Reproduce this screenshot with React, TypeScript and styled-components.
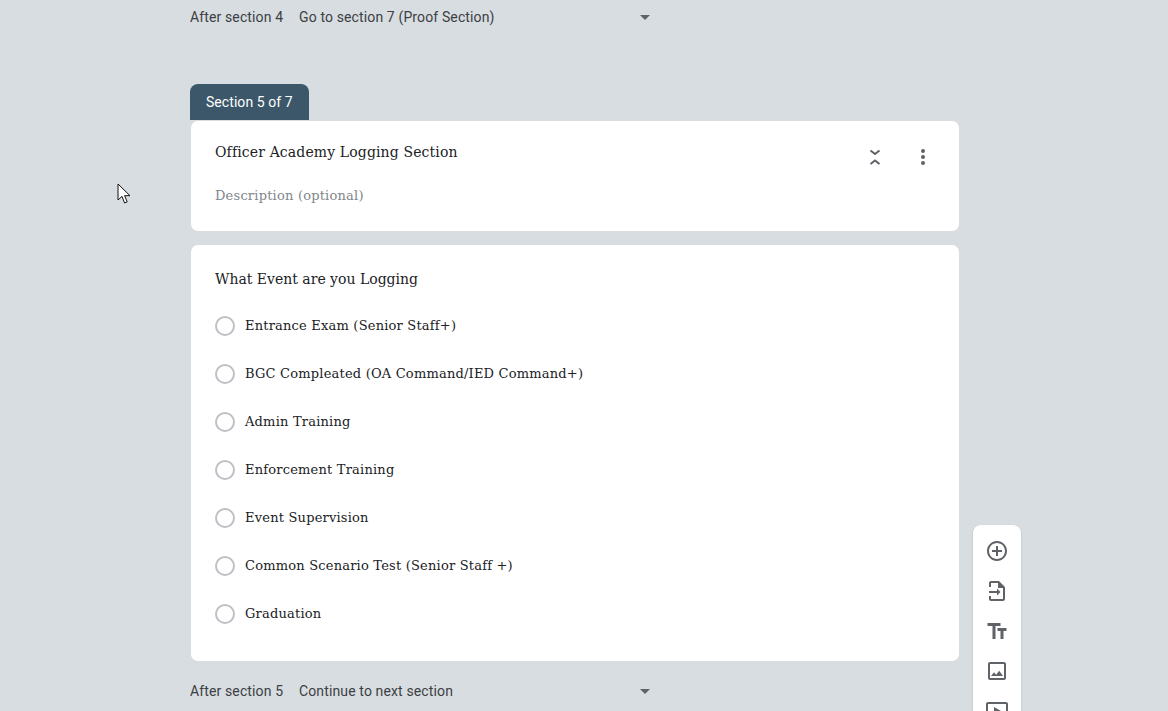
import React from 'react';
import styled, { createGlobalStyle } from 'styled-components';

const GlobalStyle = createGlobalStyle`
  html, body {
    margin: 0;
    padding: 0;
    height: 100%;
    overflow: hidden;
    background: #d8dde1;
  }
`;

const Page = styled.div`
  position: relative;
  height: 711px;
  overflow: hidden;
  background: #d8dde1;
  font-family: Roboto, 'Liberation Sans', sans-serif;
  letter-spacing: 0.13px;
`;

const Column = styled.main`
  display: flex;
  flex-direction: column;
  width: 770px;
  margin-left: 190px;
`;

const AfterRow = styled.div<{ $gapBelow?: number; $gapAbove?: number }>`
  display: flex;
  align-items: center;
  height: 34px;
  font-size: 14px;
  color: #3c4043;
  margin-top: ${(props) => props.$gapAbove ?? 0}px;
  margin-bottom: ${(props) => props.$gapBelow ?? 0}px;
`;

const AfterLabel = styled.span`
  width: 109px;
`;

const AfterValue = styled.span`
  width: 341px;
`;

const Caret = styled.span`
  width: 0;
  height: 0;
  border-left: 5px solid transparent;
  border-right: 5px solid transparent;
  border-top: 5px solid #5f6368;
`;

const Tab = styled.div`
  align-self: flex-start;
  width: 119px;
  height: 36px;
  box-sizing: border-box;
  padding-left: 16px;
  line-height: 36px;
  font-size: 14px;
  letter-spacing: 0.06px;
  color: #fff;
  background: #3b5769;
  border-radius: 8px 8px 0 0;
`;

const Card = styled.section`
  box-sizing: border-box;
  width: 770px;
  background: #fff;
  border: 1px solid #dadce0;
  border-radius: 8px;
  font-family: 'DejaVu Serif', 'Liberation Serif', serif;
  color: #202124;
  letter-spacing: 0;
`;

const HeaderCard = styled(Card)`
  display: flex;
  justify-content: space-between;
  height: 112px;
  padding: 21px 24px 0;
`;

const QuestionCard = styled(Card)`
  height: 418px;
  margin-top: 12px;
  padding: 24px 24px 0;
`;

const CardTitle = styled.div<{ $spacing?: number }>`
  font-size: 14px;
  line-height: 20px;
  letter-spacing: ${(props) => props.$spacing ?? 0}px;
`;

const Description = styled.div`
  margin-top: 24px;
  font-size: 13px;
  line-height: 20px;
  letter-spacing: 0.2px;
  color: #80868b;
`;

const HeaderIcons = styled.div`
  display: flex;
  gap: 24px;
  margin-top: 3px;
  color: #5f6368;
`;

const IconSlot = styled.svg`
  display: block;
  width: 24px;
  height: 24px;
  fill: currentColor;
`;

const Options = styled.div`
  display: flex;
  flex-direction: column;
  margin-top: 13px;
`;

const Option = styled.label`
  display: flex;
  align-items: center;
  gap: 10px;
  height: 48px;
  font-size: 13px;
  letter-spacing: 0.2px;
`;

const OptionText = styled.span`
  padding-bottom: 2px;
`;

const Radio = styled.span`
  box-sizing: border-box;
  width: 20px;
  height: 20px;
  border: 2px solid #bdc1c6;
  border-radius: 50%;
`;

const Toolbar = styled.aside`
  position: absolute;
  left: 973px;
  top: 525px;
  display: flex;
  flex-direction: column;
  align-items: center;
  gap: 16px;
  width: 48px;
  height: 200px;
  padding-top: 14px;
  box-sizing: border-box;
  background: #fff;
  border-radius: 8px;
  box-shadow: 0 1px 2px rgba(60, 64, 67, 0.25);
  color: #5f6368;
`;

const Cursor = styled.svg`
  position: absolute;
  left: 117px;
  top: 183px;
  width: 14px;
  height: 21px;
`;

const options = [
  'Entrance Exam (Senior Staff+)',
  'BGC Compleated (OA Command/IED Command+)',
  'Admin Training',
  'Enforcement Training',
  'Event Supervision',
  'Common Scenario Test (Senior Staff +)',
  'Graduation',
];

export default function App() {
  return (
    <Page>
      <GlobalStyle />
      <Column>
        <AfterRow $gapBelow={50}>
          <AfterLabel>After section 4</AfterLabel>
          <AfterValue>Go to section 7 (Proof Section)</AfterValue>
          <Caret />
        </AfterRow>
        <Tab>Section 5 of 7</Tab>
        <HeaderCard>
          <div>
            <CardTitle $spacing={0.13}>Officer Academy Logging Section</CardTitle>
            <Description>Description (optional)</Description>
          </div>
          <HeaderIcons>
            <IconSlot viewBox="0 0 24 24">
              <path d="M7.5 5.5 12 9l4.5-3.5M7.5 19 12 15.5l4.5 3.5" fill="none" stroke="currentColor" strokeWidth="2" />
            </IconSlot>
            <IconSlot viewBox="0 0 24 24">
              <circle cx="12" cy="6" r="2" />
              <circle cx="12" cy="12" r="2" />
              <circle cx="12" cy="18" r="2" />
            </IconSlot>
          </HeaderIcons>
        </HeaderCard>
        <QuestionCard>
          <CardTitle>What Event are you Logging</CardTitle>
          <Options>
            {options.map((option) => (
              <Option key={option}>
                <Radio />
                <OptionText>{option}</OptionText>
              </Option>
            ))}
          </Options>
        </QuestionCard>
        <AfterRow $gapAbove={12}>
          <AfterLabel>After section 5</AfterLabel>
          <AfterValue>Continue to next section</AfterValue>
          <Caret />
        </AfterRow>
      </Column>
      <Toolbar>
        <IconSlot viewBox="0 0 24 24">
          <path d="M13 7h-2v4H7v2h4v4h2v-4h4v-2h-4V7zm-1-5C6.48 2 2 6.48 2 12s4.48 10 10 10 10-4.48 10-10S17.52 2 12 2zm0 18c-4.41 0-8-3.59-8-8s3.59-8 8-8 8 3.59 8 8-3.59 8-8 8z" />
        </IconSlot>
        <IconSlot viewBox="0 0 24 24">
          <path d="M14 2H6c-1.1 0-2 .9-2 2v4h2V4h7v5h5v11H6v-3H4v3c0 1.1.9 2 2 2h12c1.1 0 2-.9 2-2V8l-6-6z" />
          <path d="M4 12h8V9.5l3.5 3.5-3.5 3.5V14H4z" />
        </IconSlot>
        <IconSlot viewBox="0 0 24 24">
          <path d="M2.5 4v3h5v13h3V7h5V4h-13zm19 5h-9v3h3v8h3v-8h3V9z" />
        </IconSlot>
        <IconSlot viewBox="0 0 24 24">
          <path d="M19 5v14H5V5h14m0-2H5c-1.1 0-2 .9-2 2v14c0 1.1.9 2 2 2h14c1.1 0 2-.9 2-2V5c0-1.1-.9-2-2-2zm-4.86 8.86-3 3.87L9 13.14 6 17h12l-3.86-5.14z" />
        </IconSlot>
        <IconSlot viewBox="0 0 24 24">
          <path d="M21 3H3c-1.1 0-2 .9-2 2v14c0 1.1.9 2 2 2h18c1.1 0 2-.9 2-2V5c0-1.1-.9-2-2-2zm0 16H3V5h18v14zM9 8v8l7-4z" />
        </IconSlot>
      </Toolbar>
      <Cursor viewBox="0 0 14 21">
        <path d="M1 1v16l4-3.6L7.6 20l2.6-1.1-2.6-6.2H13z" fill="#fff" stroke="#111" strokeWidth="1" />
      </Cursor>
    </Page>
  );
}
